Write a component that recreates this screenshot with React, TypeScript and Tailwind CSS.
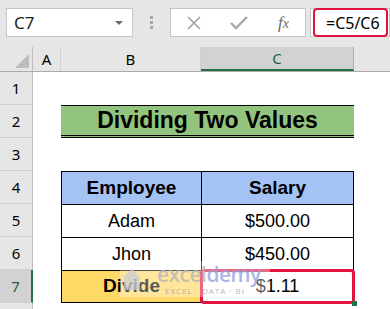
import React from "react";

const ui = { fontFamily: '"Noto Sans", "Open Sans", sans-serif' };
const arial = { fontFamily: '"Liberation Sans", Arial, sans-serif' };

type RowProps = {
	n?: number;
	selected?: boolean;
	children?: React.ReactNode;
};

// one spreadsheet row: row header + columns A..D
const Row = ({ n, selected, children }: RowProps) => (
	<div className="flex h-[33px]">
		<div
			className={`w-[33px] shrink-0 flex items-center justify-center text-[15px] border-b border-[#d0d0d0] ${
				selected
					? "bg-[#d2d2d2] text-[#1d5e3a] border-r-2 border-r-[#217346]"
					: "bg-[#e6e6e6] text-black border-r border-r-[#bdbdbd]"
			}`}
			style={ui}
		>
			{n}
		</div>
		<div className="w-[28px] shrink-0 bg-white" />
		{children ?? <div className="w-[293px] shrink-0 bg-white" />}
		<div className="flex-1 bg-white" />
	</div>
);

const Cell = ({
	w,
	bg,
	bold,
	last,
	right,
	children,
}: {
	w: string;
	bg: string;
	bold?: boolean;
	last?: boolean;
	right?: boolean;
	children?: React.ReactNode;
}) => (
	<div
		className={`${w} ${bg} h-[33px] shrink-0 border-l border-t border-black flex items-center justify-center text-black ${
			right ? "border-r" : ""
		} ${last ? "border-b" : ""} ${bold ? "font-bold text-[19px]" : "text-[18px]"}`}
		style={arial}
	>
		{children}
	</div>
);

const App = () => {
	return (
		<div className="w-[390px] h-[309px] overflow-hidden bg-white relative">
			{/* formula bar */}
			<div className="h-[47px] bg-[#e6e6e6] flex items-start pt-[8px]">
				<div
					className="ml-[6px] w-[127px] h-[29px] bg-white border border-[#c6c6c6] flex items-center justify-between pl-[7px] pr-[9px] text-[17px] text-[#1f1f1f]"
					style={ui}
				>
					<span>C7</span>
					<span className="w-0 h-0 border-l-[4px] border-r-[4px] border-t-[4px] border-l-transparent border-r-transparent border-t-[#6d6d6d]" />
				</div>
				<div className="w-[37px] h-[29px] flex flex-col items-center justify-center gap-[2px]">
					<span className="w-[3px] h-[3px] bg-[#a6a6a6]" />
					<span className="w-[3px] h-[3px] bg-[#a6a6a6]" />
					<span className="w-[3px] h-[3px] bg-[#a6a6a6]" />
				</div>
				<div className="w-[136px] h-[29px] bg-white border border-[#c6c6c6] flex items-center">
					<svg width="16" height="16" viewBox="0 0 16 16" className="ml-[15px]">
						<path d="M2 2 L14 14 M14 2 L2 14" stroke="#a0a0a0" strokeWidth="1.6" />
					</svg>
					<svg width="18" height="14" viewBox="0 0 18 14" className="ml-[28px]">
						<path d="M1 7 L6 12 L17 1" stroke="#a8a8a8" strokeWidth="2.4" fill="none" />
					</svg>
					<span
						className="ml-[30px] text-[17px] italic text-[#6b6b6b]"
						style={{ fontFamily: '"Liberation Serif", "Times New Roman", serif' }}
					>
						f<span className="text-[14px]">x</span>
					</span>
				</div>
				<div className="ml-[4px] flex-1 h-[29px] bg-white border border-[#c6c6c6] flex items-stretch pl-[2px]">
					<div
						className="w-[75px] -my-[1px] border-[2.5px] border-[#e0143c] rounded-[4px] flex items-center pl-[11px] text-[16px] text-black"
						style={ui}
					>
						=C5/C6
					</div>
				</div>
			</div>

			{/* column headers */}
			<div className="flex h-[25px] bg-[#e6e6e6] border-b border-[#ababab]" style={ui}>
				<div className="w-[33px] shrink-0 border-r border-[#bdbdbd] flex items-end justify-end pr-[3px] pb-[3px]">
					<svg width="14" height="14" viewBox="0 0 14 14">
						<path d="M14 0 L14 14 L0 14 Z" fill="#bdbdbd" />
					</svg>
				</div>
				<div className="w-[28px] shrink-0 border-r border-[#d0d0d0] flex items-center justify-center text-[15px] text-black">
					A
				</div>
				<div className="w-[140px] shrink-0 border-r border-[#d0d0d0] flex items-center justify-center text-[15px] text-black">
					B
				</div>
				<div className="w-[153px] shrink-0 bg-[#d2d2d2] border-r border-[#ababab] border-b-2 border-b-[#217346] flex items-center justify-center text-[15px] text-[#1d5e3a]">
					C
				</div>
				<div className="flex-1" />
			</div>

			<Row n={1} />
			<Row n={2}>
				<div
					className="w-[293px] shrink-0 bg-[#93c47d] border-t border-black border-b-[3px] border-b-black border-double flex items-center justify-center text-[23px] font-bold text-black"
					style={arial}
				>
					Dividing Two Values
				</div>
			</Row>
			<Row n={3} />
			<Row n={4}>
				<Cell w="w-[140px]" bg="bg-[#a4c2f4]" bold>
					Employee
				</Cell>
				<Cell w="w-[153px]" bg="bg-[#a4c2f4]" bold right>
					Salary
				</Cell>
			</Row>
			<Row n={5}>
				<Cell w="w-[140px]" bg="bg-white">
					Adam
				</Cell>
				<Cell w="w-[153px]" bg="bg-white" right>
					$500.00
				</Cell>
			</Row>
			<Row n={6}>
				<Cell w="w-[140px]" bg="bg-white">
					Jhon
				</Cell>
				<Cell w="w-[153px]" bg="bg-white" right>
					$450.00
				</Cell>
			</Row>
			<Row n={7} selected>
				<Cell w="w-[140px]" bg="bg-[#ffd966]" bold last>
					Divide
				</Cell>
				<div className="relative">
					<Cell w="w-[153px]" bg="bg-white" right last>
						$1.11
					</Cell>
					<div className="absolute -left-[1px] -top-[1px] -right-[1px] -bottom-[1px] border-[3px] border-[#e0143c] rounded-[4px]" />
					<div className="absolute -right-[3px] -bottom-[3px] w-[5px] h-[5px] bg-[#217346]" />
				</div>
			</Row>
			<Row />

			{/* watermark */}
			<div className="absolute left-[120px] top-[261px] w-[150px] h-[36px] bg-white/35 flex items-center pl-[3px] pointer-events-none">
				<svg width="18" height="24" viewBox="0 0 18 24" className="shrink-0 opacity-70">
					<path d="M1 9 L9 2 L17 9 L17 23 L1 23 Z" fill="#c9cbd8" />
				</svg>
				<div className="ml-[16px] flex flex-col leading-none opacity-75" style={{ fontFamily: '"Open Sans", sans-serif' }}>
					<span className="text-[21px] font-semibold tracking-tight">
						<span className="text-[#b4b4bc]">excel</span>
						<span className="text-[#8f9ee0]">demy</span>
					</span>
					<span className="text-[8px] tracking-[1px] whitespace-nowrap text-[#9a9aa6] mt-[2px] ml-[8px]">EXCEL · DATA · BI</span>
				</div>
			</div>
		</div>
	);
};

export default App;
